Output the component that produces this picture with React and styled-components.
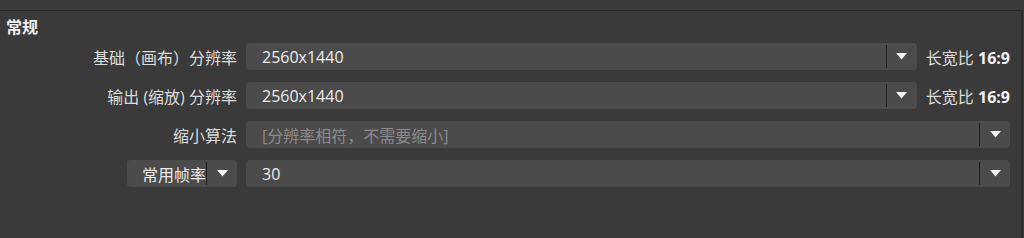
import React from "react";
import styled, { createGlobalStyle } from "styled-components";

const GlobalStyle = createGlobalStyle`
  html, body {
    margin: 0;
    padding: 0;
    background: #3a3a3a;
  }
  body {
    font-family: "Open Sans", "Noto Sans CJK SC", sans-serif;
    font-size: 16px;
    color: #dedede;
  }
`;

const Page = styled.div`
  width: 1024px;
  height: 238px;
  padding-top: 10px;
  box-sizing: border-box;
  overflow: hidden;
`;

const GroupBox = styled.section`
  height: 100%;
  border-top: 1px solid #2a2a2a;
  border-right: 2px solid #2e2e2e;
  box-sizing: border-box;
  margin-right: 1px;
`;

const Title = styled.div`
  padding: 5px 0 0 6px;
  font-weight: 700;
  line-height: 22px;
  color: #f0f0f0;
`;

const Form = styled.div`
  display: grid;
  grid-template-columns: 237px 1fr;
  column-gap: 9px;
  row-gap: 12px;
  grid-auto-rows: 27px;
  padding: 5px 11px 0 0;
`;

const Label = styled.div`
  display: flex;
  align-items: center;
  justify-content: flex-end;
  white-space: nowrap;
  color: #dcdcdc;
`;

const Field = styled.div`
  display: flex;
  align-items: center;
  gap: 9px;
  min-width: 0;
`;

const Combo = styled.div`
  flex: ${p => (p.$width ? "none" : 1)};
  width: ${p => (p.$width ? `${p.$width}px` : "auto")};
  height: 27px;
  display: flex;
  align-items: center;
  background: #4b4b4b;
  border-radius: 4px;
  box-sizing: border-box;
  min-width: 0;
`;

const ComboText = styled.span`
  flex: 1;
  padding-left: ${p => p.$pad}px;
  white-space: nowrap;
  overflow: hidden;
  color: ${p => (p.$muted ? "#8a8a8a" : "#ececec")};
`;

const ArrowButton = styled.div`
  width: 30px;
  height: 23px;
  display: flex;
  align-items: center;
  justify-content: center;
  border-left: 1px solid #1f1f1f;
  flex: none;
`;

const Aspect = styled.span`
  white-space: nowrap;
  color: #dcdcdc;
  b {
    font-weight: 700;
    color: #f2f2f2;
  }
`;

const Arrow = () => (
  <svg width="11" height="7" viewBox="0 0 11 7">
    <polygon points="0,0 11,0 5.5,6.5" fill="#f4f4f4" />
  </svg>
);

function ComboBox({ value, muted, width, pad = 16 }) {
  return (
    <Combo $width={width}>
      <ComboText $muted={muted} $pad={pad}>
        {value}
      </ComboText>
      <ArrowButton>
        <Arrow />
      </ArrowButton>
    </Combo>
  );
}

export default function App() {
  return (
    <>
      <GlobalStyle />
      <Page>
        <GroupBox>
          <Title>常规</Title>
          <Form>
            <Label>基础（画布）分辨率</Label>
            <Field>
              <ComboBox value="2560x1440" />
              <Aspect>
                长宽比 <b>16:9</b>
              </Aspect>
            </Field>

            <Label>输出 (缩放) 分辨率</Label>
            <Field>
              <ComboBox value="2560x1440" />
              <Aspect>
                长宽比 <b>16:9</b>
              </Aspect>
            </Field>

            <Label>缩小算法</Label>
            <Field>
              <ComboBox value="[分辨率相符，不需要缩小]" muted />
            </Field>

            <Label>
              <ComboBox value="常用帧率" width={110} pad={15} />
            </Label>
            <Field>
              <ComboBox value="30" />
            </Field>
          </Form>
        </GroupBox>
      </Page>
    </>
  );
}
